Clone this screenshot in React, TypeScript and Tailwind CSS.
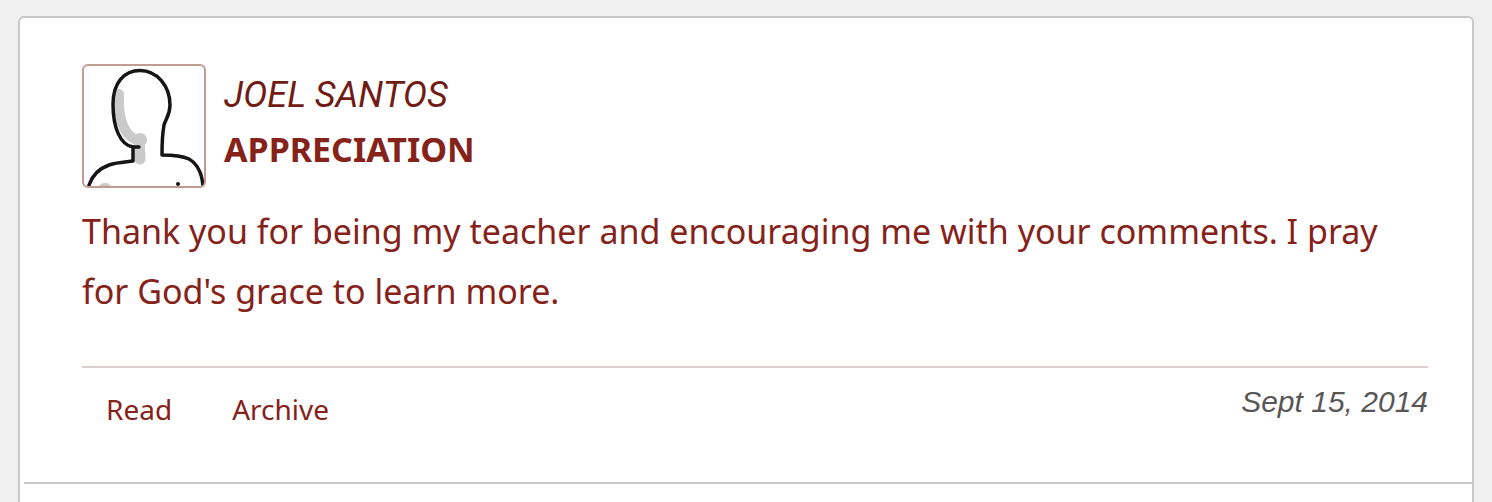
interface Message {
  id: number;
  author: string;
  title: string;
  body: string;
  date: string;
}

const messages: Message[] = [
  {
    id: 1,
    author: 'JOEL SANTOS',
    title: 'APPRECIATION',
    body: "Thank you for being my teacher and encouraging me with your comments. I pray for God's grace to learn more.",
    date: 'Sept 15, 2014',
  },
];

const Avatar = () => (
  <div className="size-[124px] shrink-0 overflow-hidden rounded-md border-2 border-[#c39b95] bg-white">
    <svg viewBox="0 0 120 120" className="size-full" fill="none" strokeLinecap="round" aria-hidden="true">
      {/* Shading */}
      <g stroke="#cacaca">
        <path d="M35 28C34 52 39 71 56 75" strokeWidth="10" />
        <path d="M55 75L56 93" strokeWidth="11" />
        <circle cx="56" cy="74" r="7" fill="#cacaca" stroke="none" />
        <ellipse cx="21" cy="121" rx="6" ry="4" fill="#cacaca" stroke="none" />
      </g>
      {/* Outline */}
      <g stroke="#161414" strokeWidth="3.5" strokeLinejoin="round">
        <path d="M55 81H49C36 79 29 61 29 38C29 17 40 4.500 56 4.500C73 4.500 86 20 86 39C86 49 82 52 80 59C78 70 78 78 78 89C86 89 96 89 105 93C114 98 118 108 119 120" />
        <path d="M49 81V95C43 96 34 96 25 99C14 103 8 110 5 119" />
      </g>
      <circle cx="94" cy="118" r="2" fill="#161414" />
    </svg>
  </div>
);

const MessageItem = ({ message }: { message: Message }) => (
  <article className="ml-1 border-b-2 border-[#c8c8c8] pt-[46px] pr-11 pb-[53px] pl-[58px] text-[#85221a]">
    {/* Header */}
    <header className="flex gap-[18px]">
      <Avatar />
      <div className="pt-1">
        <p className="font-['Roboto',sans-serif] text-[36px] leading-[54px] text-[#701c14] italic">{message.author}</p>
        <h2 className="text-[34px] leading-[54px] font-bold">{message.title}</h2>
      </div>
    </header>

    <p className="mt-[13px] text-[34px] leading-[60px]">{message.body}</p>

    {/* Actions */}
    <footer className="mt-[45px] flex items-start justify-between border-t-2 border-[#dccfce] text-[28px] leading-[40px]">
      <div className="flex gap-[60px] pt-[21px] pl-6">
        <button type="button">Read</button>
        <button type="button">Archive</button>
      </div>
      <time className="pt-[14px] font-['Liberation_Sans',Arial,sans-serif] text-[30px] text-[#595656] italic" dateTime="2014-09-15">
        {message.date}
      </time>
    </footer>
  </article>
);

export default function App() {
  return (
    <main className="h-screen overflow-hidden bg-[#f0f0f0] pt-4 pr-[18px] pl-[18px] font-['Noto_Sans',sans-serif]">
      <section className="min-h-full rounded-t-md border-2 border-b-0 border-[#c8c8c8] bg-white">
        {messages.map((message) => (
          <MessageItem key={message.id} message={message} />
        ))}
      </section>
    </main>
  );
}
